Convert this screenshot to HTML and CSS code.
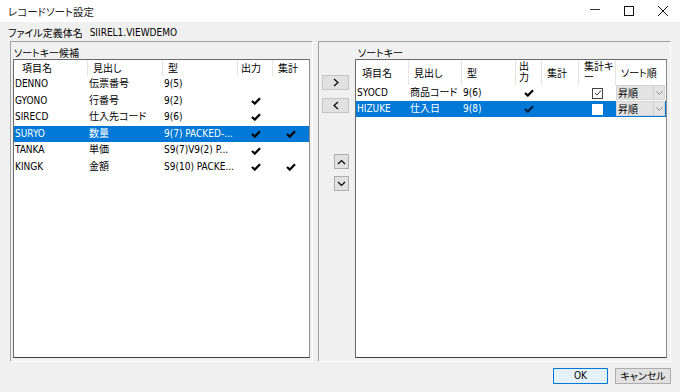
FILE: index.html
```html
<!DOCTYPE html>
<html lang="ja">
<head>
<meta charset="utf-8">
<title>レコードソート設定</title>
<link rel="stylesheet" href="styles.css">
</head>
<body>
<div class="window">
  <div class="titlebar">
    <span class="title">レコードソート設定</span>
    <div class="controls">
      <span class="ctl"><svg width="10" height="10" viewBox="0 0 10 10"><path d="M0 3.5H10" stroke="#333" stroke-width="1"/></svg></span>
      <span class="ctl"><svg width="10" height="10" viewBox="0 0 10 10"><rect x="0.5" y="0.5" width="9" height="9" fill="none" stroke="#111" stroke-width="1"/></svg></span>
      <span class="ctl"><svg width="10" height="10" viewBox="0 0 10 10"><path d="M0 0L10 10M10 0L0 10" stroke="#111" stroke-width="1"/></svg></span>
    </div>
  </div>

  <div class="file-row">
    <span class="file-label">ファイル定義体名</span>
    <span class="file-name">SIIREL1.VIEWDEMO</span>
  </div>

  <div class="main">
    <section class="panel panel-left">
      <div class="panel-label">ソートキー候補</div>
      <div class="list">
        <div class="lgrid lhead">
          <div class="hc hc-first">項目名</div>
          <div class="hc">見出し</div>
          <div class="hc">型</div>
          <div class="hc hc-narrow">出力</div>
          <div class="hc hc-last">集計</div>
        </div>
        <div class="lgrid lrow">
          <div class="c">DENNO</div><div class="c">伝票番号</div><div class="c">9(5)</div><div class="c ck"></div><div class="c ck"></div>
        </div>
        <div class="lgrid lrow">
          <div class="c">GYONO</div><div class="c">行番号</div><div class="c">9(2)</div>
          <div class="c ck"><svg class="check" width="10" height="8" viewBox="0 0 10 8"><path d="M1 4L3.8 6.6L9 1.2"/></svg></div><div class="c ck"></div>
        </div>
        <div class="lgrid lrow">
          <div class="c">SIRECD</div><div class="c">仕入先コード</div><div class="c">9(6)</div>
          <div class="c ck"><svg class="check" width="10" height="8" viewBox="0 0 10 8"><path d="M1 4L3.8 6.6L9 1.2"/></svg></div><div class="c ck"></div>
        </div>
        <div class="lgrid lrow selected">
          <div class="c">SURYO</div><div class="c">数量</div><div class="c">9(7) PACKED-...</div>
          <div class="c ck"><svg class="check" width="10" height="8" viewBox="0 0 10 8"><path d="M1 4L3.8 6.6L9 1.2"/></svg></div>
          <div class="c ck"><svg class="check" width="10" height="8" viewBox="0 0 10 8"><path d="M1 4L3.8 6.6L9 1.2"/></svg></div>
        </div>
        <div class="lgrid lrow">
          <div class="c">TANKA</div><div class="c">単価</div><div class="c">S9(7)V9(2) P...</div>
          <div class="c ck"><svg class="check" width="10" height="8" viewBox="0 0 10 8"><path d="M1 4L3.8 6.6L9 1.2"/></svg></div><div class="c ck"></div>
        </div>
        <div class="lgrid lrow">
          <div class="c">KINGK</div><div class="c">金額</div><div class="c">S9(10) PACKE...</div>
          <div class="c ck"><svg class="check" width="10" height="8" viewBox="0 0 10 8"><path d="M1 4L3.8 6.6L9 1.2"/></svg></div>
          <div class="c ck"><svg class="check" width="10" height="8" viewBox="0 0 10 8"><path d="M1 4L3.8 6.6L9 1.2"/></svg></div>
        </div>
      </div>
    </section>

    <section class="panel panel-right">
      <div class="nav">
        <button class="nav-btn nav-wide nav-first"><svg width="6" height="9" viewBox="0 0 6 9"><path d="M1 1L5 4.5L1 8" fill="none" stroke="#000" stroke-width="1.2"/></svg></button>
        <button class="nav-btn nav-wide nav-second"><svg width="6" height="9" viewBox="0 0 6 9"><path d="M5 1L1 4.5L5 8" fill="none" stroke="#000" stroke-width="1.2"/></svg></button>
        <button class="nav-btn nav-small nav-up"><svg width="9" height="6" viewBox="0 0 9 6"><path d="M1 5L4.5 1.5L8 5" fill="none" stroke="#000" stroke-width="1.2"/></svg></button>
        <button class="nav-btn nav-small nav-down"><svg width="9" height="6" viewBox="0 0 9 6"><path d="M1 1L4.5 4.5L8 1" fill="none" stroke="#000" stroke-width="1.2"/></svg></button>
      </div>
      <div class="right-col">
        <div class="panel-label panel-label-right">ソートキー</div>
        <div class="list">
          <div class="rgrid rhead">
            <div class="rh rh-first">項目名</div>
            <div class="rh">見出し</div>
            <div class="rh">型</div>
            <div class="rh rh-two rh-narrow"><span class="ln">出</span><span class="ln">力</span></div>
            <div class="rh">集計</div>
            <div class="rh rh-two"><span class="ln">集計キ</span><span class="ln">ー</span></div>
            <div class="rh rh-last">ソート順</div>
          </div>
          <div class="rgrid rrow">
            <div class="c">SYOCD</div><div class="c">商品コード</div><div class="c">9(6)</div>
            <div class="c ck"><svg class="check" width="10" height="8" viewBox="0 0 10 8"><path d="M1 4L3.8 6.6L9 1.2"/></svg></div>
            <div class="c"></div>
            <div class="c ck"><span class="cbox"><svg width="8" height="8" viewBox="0 0 8 8"><path d="M1 4L3 6L7 1.5" fill="none" stroke="#333" stroke-width="1"/></svg></span></div>
            <div class="c cc"><span class="combo"><span class="combo-text">昇順</span><span class="combo-btn"><svg width="7" height="4" viewBox="0 0 7 4"><path d="M0.5 0.5L3.5 3.5L6.5 0.5" fill="none" stroke="#888" stroke-width="1"/></svg></span></span></div>
          </div>
          <div class="rgrid rrow selected">
            <div class="c">HIZUKE</div><div class="c">仕入日</div><div class="c">9(8)</div>
            <div class="c ck"><svg class="check check-dark" width="10" height="8" viewBox="0 0 10 8"><path d="M1 4L3.8 6.6L9 1.2"/></svg></div>
            <div class="c"></div>
            <div class="c ck"><span class="cbox cbox-sel"></span></div>
            <div class="c cc"><span class="combo"><span class="combo-text">昇順</span><span class="combo-btn"><svg width="7" height="4" viewBox="0 0 7 4"><path d="M0.5 0.5L3.5 3.5L6.5 0.5" fill="none" stroke="#888" stroke-width="1"/></svg></span></span></div>
          </div>
        </div>
      </div>
    </section>
  </div>

  <div class="footer">
    <button class="btn btn-ok">OK</button>
    <button class="btn btn-cancel">キャンセル</button>
  </div>
</div>
</body>
</html>
```

FILE: styles.css
```css
html, body {
  margin: 0;
  padding: 0;
}

body {
  width: 680px;
  height: 392px;
  overflow: hidden;
  background: #f0f0f0;
  font-family: "DejaVu Sans Condensed", "Noto Sans CJK JP", sans-serif;
  font-feature-settings: "palt";
  font-size: 10px;
  color: #000;
}

.window {
  display: flex;
  flex-direction: column;
  height: 392px;
}

/* title bar */
.titlebar {
  height: 22px;
  background: #fff;
  display: flex;
  align-items: center;
}

.title {
  padding-left: 8px;
  font-family: "Noto Sans CJK JP", sans-serif;
  font-size: 10.5px;
  color: #222;
}

.controls {
  margin-left: auto;
  display: flex;
}

.ctl {
  width: 34px;
  height: 22px;
  display: flex;
  align-items: center;
  justify-content: center;
}

/* file row */
.file-row {
  height: 19px;
  box-sizing: border-box;
  padding: 3px 0 0 8px;
  line-height: 16px;
  display: flex;
}

.file-label {
  font-family: "Noto Sans CJK JP", sans-serif;
}

.file-name {
  margin-left: 7px;
}

/* main split */
.main {
  display: flex;
  gap: 5px;
  margin-left: 10px;
  height: 321px;
}

.panel {
  box-sizing: border-box;
  border: 1px solid;
  border-color: #a0a0a0 #ffffff #ffffff #a0a0a0;
  display: flex;
}

.panel-left {
  width: 303px;
  flex-direction: column;
  padding: 0 2px 3px 2px;
}

.panel-right {
  width: 353px;
  padding: 0 3px 3px 3px;
}

.panel-label {
  height: 17px;
  box-sizing: border-box;
  padding: 4px 0 0 1px;
  line-height: 13px;
  font-family: "Noto Sans CJK JP", sans-serif;
}

.panel-label-right {
  padding-left: 3px;
}

.list {
  flex: 1;
  background: #fff;
  border: 1px solid;
  border-color: #6a6a6a #8a8a8a #404040 #6a6a6a;
}

/* left list */
.lgrid {
  display: grid;
  grid-template-columns: 74px 75px 75px 35px 1fr;
}

.lhead {
  height: 16px;
  line-height: 16px;
}

.hc {
  border-right: 1px solid #e5e5e5;
  padding-left: 5px;
  white-space: nowrap;
  font-family: "Noto Sans CJK JP", sans-serif;
}

.hc-first {
  padding-left: 8px;
}

.hc-narrow {
  padding-left: 3px;
}

.hc-last {
  border-right: none;
  padding-left: 5px;
}

.lrow {
  height: 16.6px;
  line-height: 16.6px;
}

.c {
  padding-left: 1px;
  white-space: nowrap;
  overflow: hidden;
}

.ck {
  display: flex;
  align-items: center;
  justify-content: center;
  padding-left: 0;
}

.check path {
  fill: none;
  stroke: #000;
  stroke-width: 2.2;
}

.check-dark path {
  stroke: #0a1f3c;
}

.selected {
  background: #0078d7;
  color: #fff;
}

/* right side */
.nav {
  width: 27px;
  margin-right: 6px;
  display: flex;
  flex-direction: column;
  align-items: flex-end;
}

.nav-btn {
  box-sizing: border-box;
  height: 15px;
  padding: 0;
  margin: 0;
  background: #e1e1e1;
  border: 1px solid #c4c4c4;
  display: flex;
  align-items: center;
  justify-content: center;
}

.nav-wide {
  width: 27px;
}

.nav-small {
  width: 15px;
  border-color: #adadad;
}

.nav-first {
  margin-top: 33px;
}

.nav-second {
  margin-top: 8px;
}

.nav-up {
  margin-top: 41px;
}

.nav-down {
  margin-top: 7px;
}

.right-col {
  flex: 1;
  display: flex;
  flex-direction: column;
}

.rgrid {
  display: grid;
  grid-template-columns: 53px 53px 54px 26px 37px 37px 50px;
}

.rhead {
  height: 25px;
}

.rh {
  border-right: 1px solid #e5e5e5;
  padding-left: 5px;
  line-height: 25px;
  white-space: nowrap;
  font-family: "Noto Sans CJK JP", sans-serif;
}

.rh-first {
  padding-left: 6px;
}

.rh-two {
  display: flex;
  flex-direction: column;
  line-height: 11px;
  padding-top: 0;
}

.ln {
  display: block;
  height: 11px;
}

.rh-narrow {
  padding-left: 3px;
}

.rh-last {
  border-right: none;
}

.rrow {
  height: 16px;
  line-height: 16px;
}

.cbox {
  box-sizing: border-box;
  width: 11px;
  height: 11px;
  border: 1px solid #444;
  background: #fff;
  display: flex;
  align-items: center;
  justify-content: center;
}

.cbox-sel {
  border-color: #fff;
}

.cc {
  padding-left: 0;
}

.combo {
  box-sizing: border-box;
  width: 49px;
  height: 15px;
  display: flex;
  background: #e3e3e3;
  border: 1px solid #d4d4d4;
  color: #000;
  line-height: 13px;
}

.combo-text {
  flex: 1;
  padding-left: 1px;
  font-family: "Noto Sans CJK JP", sans-serif;
}

.combo-btn {
  width: 10px;
  border-left: 1px solid #d0d0d0;
  display: flex;
  align-items: center;
  justify-content: center;
}

/* footer */
.footer {
  display: flex;
  justify-content: flex-end;
  gap: 7px;
  padding: 6px 9px 0 0;
}

.btn {
  box-sizing: border-box;
  height: 16px;
  padding: 0;
  margin: 0;
  font-family: "DejaVu Sans Condensed", "Noto Sans CJK JP", sans-serif;
  font-size: 10px;
  line-height: 14px;
  color: #000;
}

.btn-ok {
  width: 55px;
  background: #e5f1fb;
  border: 1px solid #0078d7;
}

.btn-cancel {
  width: 56px;
  background: #e1e1e1;
  border: 1px solid #adadad;
  font-family: "Noto Sans CJK JP", sans-serif;
  font-feature-settings: "palt";
}
```
